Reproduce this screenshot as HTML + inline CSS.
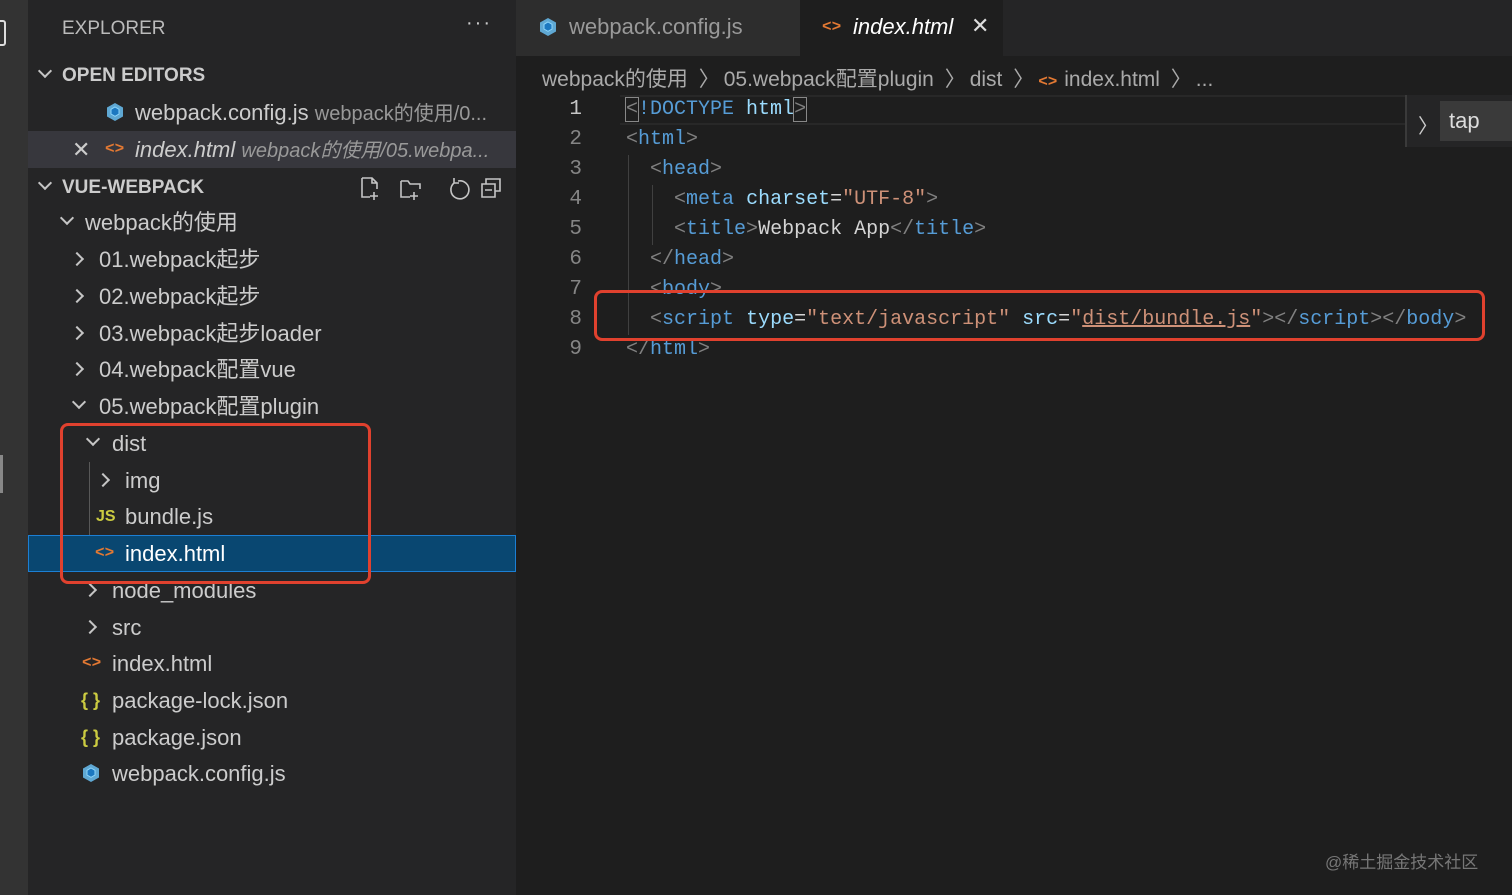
<!DOCTYPE html>
<html><head><meta charset="utf-8"><style>
*{margin:0;padding:0;box-sizing:border-box}
body{width:1512px;height:895px;background:#1e1e1e;position:relative;overflow:hidden;font-family:"Liberation Sans","Noto Sans CJK SC",sans-serif;color:#ccc}
.a{position:absolute;white-space:nowrap}
.act{left:0;top:0;width:28px;height:895px;background:#333}
.side{left:28px;top:0;width:488px;height:895px;background:#252526}
.row{position:absolute;left:28px;width:488px;height:37px;line-height:37px;font-size:22px;color:#ccc;white-space:nowrap}
.chev{position:absolute;top:13px;width:10px;height:10px;border-right:2px solid #c5c5c5;border-bottom:2px solid #c5c5c5}
.down{transform:rotate(45deg);top:9px}
.right{transform:rotate(-45deg)}
.code{position:absolute;left:626px;font-family:"Liberation Mono",monospace;font-size:20px;line-height:30px;white-space:pre;color:#d4d4d4}
.ln{position:absolute;left:540px;width:42px;text-align:right;font-family:"Liberation Mono",monospace;font-size:21px;line-height:30px;color:#858585}
.b{color:#808080}.t{color:#569cd6}.at{color:#9cdcfe}.s{color:#ce9178}
.html{color:#e37933;font-family:"Liberation Mono",monospace;font-weight:bold;font-size:16px}
</style></head><body>
<div class="a act"></div>
<div class="a" style="left:0;top:20px;width:6px;height:26px;border:2px solid #ddd;border-left:none;border-radius:0 3px 3px 0"></div>
<div class="a" style="left:0;top:455px;width:3px;height:38px;background:#888"></div>
<div class="a side"></div>
<div class="a" style="left:62px;top:18px;font-size:19px;color:#bbb">EXPLORER</div>
<div class="a" style="left:466px;top:12px;font-size:20px;color:#ccc;letter-spacing:2px">···</div>
<div class="row" style="top:57px;font-weight:bold;font-size:19px"><span class="chev down" style="left:12px"></span><span style="position:absolute;left:34px">OPEN EDITORS</span></div>
<div class="row" style="top:94px"><svg class="a" style="left:77px;top:8px" width="20" height="20" viewBox="0 0 20 20"><path d="M10 1L18 5.5V14.5L10 19L2 14.5V5.5Z" fill="#5fa8d3"/><path d="M10 5L14 7.3V12L10 14.3L6 12V7.3Z" fill="#1c78c0" stroke="#8ed6fb" stroke-width="1"/></svg><span style="position:absolute;left:107px">webpack.config.js <span style="font-size:20px;color:#999">webpack的使用/0...</span></span></div>
<div class="row" style="top:131px;background:#37373d"><span style="position:absolute;left:44px;font-size:22px">✕</span><span class="html" style="position:absolute;left:77px">&lt;&gt;</span><span style="position:absolute;left:107px;font-style:italic">index.html <span style="font-size:20px;color:#999">webpack的使用/05.webpa...</span></span></div>
<div class="row" style="top:169px;font-weight:bold;font-size:19px"><span class="chev down" style="left:12px"></span><span style="position:absolute;left:34px">VUE-WEBPACK</span>
<svg class="a" style="left:330px;top:6px" width="150" height="26" viewBox="0 0 150 26" fill="none" stroke="#c5c5c5" stroke-width="1.6"><path d="M4 3H14L19 8V14M4 3V22H12M14 3V8H19M16 17V25M12 21H20"/><path d="M43 6H50L52 9H62V14M43 6V22H52M56 17V25M52 21H60"/><path d="M96 8A9 9 0 1 0 100 6M96 3V8H101"/><path d="M128 9V4H142V16H137M124 9H137V22H124ZM127 15H134"/></svg></div>
<div class="row" style="top:204px"><span class="chev down" style="left:34px"></span><span style="position:absolute;left:57px">webpack的使用</span></div>
<div class="row" style="top:241px"><span class="chev right" style="left:44px"></span><span style="position:absolute;left:71px">01.webpack起步</span></div>
<div class="row" style="top:278px"><span class="chev right" style="left:44px"></span><span style="position:absolute;left:71px">02.webpack起步</span></div>
<div class="row" style="top:315px"><span class="chev right" style="left:44px"></span><span style="position:absolute;left:71px">03.webpack起步loader</span></div>
<div class="row" style="top:351px"><span class="chev right" style="left:44px"></span><span style="position:absolute;left:71px">04.webpack配置vue</span></div>
<div class="row" style="top:388px"><span class="chev down" style="left:46px"></span><span style="position:absolute;left:71px">05.webpack配置plugin</span></div>
<div class="row" style="top:425px"><span class="chev down" style="left:60px"></span><span style="position:absolute;left:84px">dist</span></div>
<div class="a" style="left:89px;top:462px;width:1px;height:110px;background:#585858"></div>
<div class="row" style="top:462px"><span class="chev right" style="left:70px"></span><span style="position:absolute;left:97px">img</span></div>
<div class="row" style="top:498px"><span style="position:absolute;left:68px;color:#cbcb41;font-weight:bold;font-size:16px">JS</span><span style="position:absolute;left:97px">bundle.js</span></div>
<div class="row" style="top:535px;background:#094771;border:1px solid #1c7fd4;color:#fff;line-height:35px"><span class="html" style="position:absolute;left:66px">&lt;&gt;</span><span style="position:absolute;left:96px">index.html</span></div>
<div class="row" style="top:572px"><span class="chev right" style="left:57px"></span><span style="position:absolute;left:84px">node_modules</span></div>
<div class="row" style="top:609px"><span class="chev right" style="left:57px"></span><span style="position:absolute;left:84px">src</span></div>
<div class="row" style="top:645px"><span class="html" style="position:absolute;left:54px">&lt;&gt;</span><span style="position:absolute;left:84px">index.html</span></div>
<div class="row" style="top:682px"><span style="position:absolute;left:53px;color:#cbcb41;font-weight:bold;font-size:18px">{ }</span><span style="position:absolute;left:84px">package-lock.json</span></div>
<div class="row" style="top:719px"><span style="position:absolute;left:53px;color:#cbcb41;font-weight:bold;font-size:18px">{ }</span><span style="position:absolute;left:84px">package.json</span></div>
<div class="row" style="top:755px"><svg class="a" style="left:53px;top:8px" width="20" height="20" viewBox="0 0 20 20"><path d="M10 1L18 5.5V14.5L10 19L2 14.5V5.5Z" fill="#5fa8d3"/><path d="M10 5L14 7.3V12L10 14.3L6 12V7.3Z" fill="#1c78c0" stroke="#8ed6fb" stroke-width="1"/></svg><span style="position:absolute;left:84px">webpack.config.js</span></div>
<div class="a" style="left:60px;top:423px;width:311px;height:161px;border:3px solid #e0412e;border-radius:8px"></div>

<div class="a" style="left:516px;top:0;width:996px;height:56px;background:#252526"></div>
<div class="a" style="left:516px;top:0;width:284px;height:56px;background:#2d2d2d"></div>
<div class="a" style="left:800px;top:0;width:203px;height:56px;background:#1e1e1e"></div>
<svg class="a" style="left:538px;top:16px" width="20" height="22" viewBox="0 0 20 20"><path d="M10 1L18 5.5V14.5L10 19L2 14.5V5.5Z" fill="#5fa8d3"/><path d="M10 5L14 7.3V12L10 14.3L6 12V7.3Z" fill="#1c78c0" stroke="#8ed6fb" stroke-width="1"/></svg>
<div class="a" style="left:569px;top:14px;font-size:22px;color:#999">webpack.config.js</div>
<span class="a html" style="left:822px;top:18px">&lt;&gt;</span>
<div class="a" style="left:853px;top:14px;font-size:22px;color:#fff;font-style:italic">index.html</div>
<div class="a" style="left:971px;top:13px;font-size:22px;color:#ddd">✕</div>
<div class="a" style="left:542px;top:63px;font-size:21px;color:#aaa;word-spacing:1px">webpack的使用 <span style="margin:0 4px">〉</span>05.webpack配置plugin <span style="margin:0 4px">〉</span>dist <span style="margin:0 4px">〉</span><span class="html">&lt;&gt;</span>  index.html <span style="margin:0 4px">〉</span>...</div>

<div class="a" style="left:620px;top:95px;width:786px;height:30px;border-top:2px solid #282828;border-bottom:2px solid #282828"></div>
<div class="ln" style="top:95px"><span style="color:#c6c6c6">1</span><br>2<br>3<br>4<br>5<br>6<br>7<br>8<br>9</div>
<div class="a" style="left:628px;top:155px;width:1px;height:180px;background:#404040"></div>
<div class="a" style="left:652px;top:185px;width:1px;height:60px;background:#404040"></div>
<div class="code" style="top:95px"><span class="b" style="outline:1px solid #888">&lt;</span><span class="t">!DOCTYPE</span> <span class="at">html</span><span class="b" style="outline:1px solid #888">&gt;</span>
<span class="b">&lt;</span><span class="t">html</span><span class="b">&gt;</span>
  <span class="b">&lt;</span><span class="t">head</span><span class="b">&gt;</span>
    <span class="b">&lt;</span><span class="t">meta</span> <span class="at">charset</span>=<span class="s">"UTF-8"</span><span class="b">&gt;</span>
    <span class="b">&lt;</span><span class="t">title</span><span class="b">&gt;</span>Webpack App<span class="b">&lt;/</span><span class="t">title</span><span class="b">&gt;</span>
  <span class="b">&lt;/</span><span class="t">head</span><span class="b">&gt;</span>
  <span class="b">&lt;</span><span class="t">body</span><span class="b">&gt;</span>
  <span class="b">&lt;</span><span class="t">script</span> <span class="at">type</span>=<span class="s">"text/javascript"</span> <span class="at">src</span>=<span class="s">"<u>dist/bundle.js</u>"</span><span class="b">&gt;&lt;/</span><span class="t">script</span><span class="b">&gt;&lt;/</span><span class="t">body</span><span class="b">&gt;</span>
<span class="b">&lt;/</span><span class="t">html</span><span class="b">&gt;</span></div>
<div class="a" style="left:594px;top:290px;width:891px;height:51px;border:3px solid #e0412e;border-radius:8px"></div>

<div class="a" style="left:1405px;top:95px;width:107px;height:52px;background:#252526;border-left:2px solid #3a3a3a"></div>
<div class="a" style="left:1440px;top:101px;width:72px;height:40px;background:#3a3a3a"></div>
<div class="a" style="left:1418px;top:110px;font-size:20px;color:#ccc">〉</div>
<div class="a" style="left:1449px;top:108px;font-size:22px;color:#ddd">tap</div>
<div class="a" style="left:1325px;top:848px;font-size:17px;color:#777">@稀土掘金技术社区</div>
</body></html>
